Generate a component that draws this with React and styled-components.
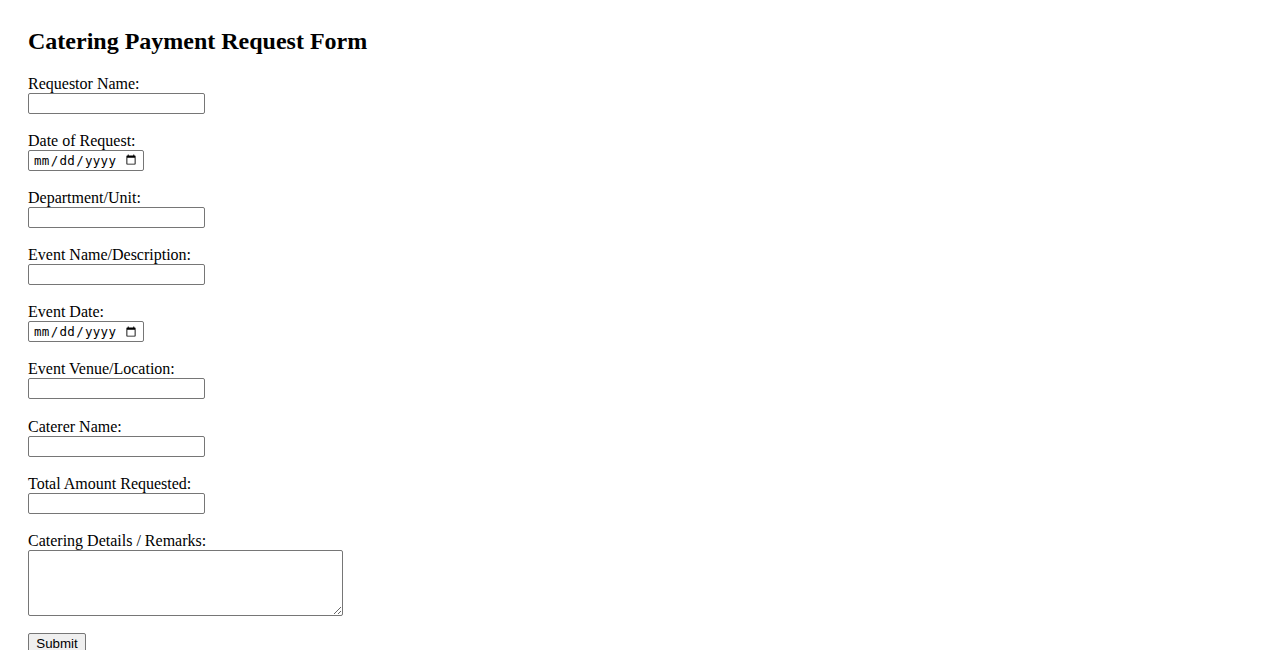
import React from "react";
import styled, { createGlobalStyle } from "styled-components";

const GlobalStyle = createGlobalStyle`
  body {
    margin: 0;
    padding: 28px;
    background: #fff;
    color: #000;
    font-family: "Liberation Serif", "Times New Roman", serif;
    font-size: 16px;
  }
`;

const Title = styled.h2`
  margin: 0 0 19px;
  font-size: 24px;
  font-weight: bold;
  line-height: 27px;
`;

const Form = styled.form`
  display: flex;
  flex-direction: column;
  align-items: flex-start;
  gap: 17.1px;
`;

const Field = styled.div`
  display: flex;
  flex-direction: column;
  align-items: flex-start;
`;

const Label = styled.label`
  padding-top: 1px;
  line-height: 18px;
`;

const TextInput = styled.input`
  box-sizing: border-box;
  width: ${(p) => (p.type === "date" ? "116px" : "177px")};
  height: 21px;
  margin: 0;
  padding: 1px 2px;
  border: 1px solid #767676;
  border-radius: 2px;
  background: #fff;
  font-size: 13.33px;
  ${(p) =>
    p.type === "date"
      ? `font-family: "DejaVu Sans Mono", monospace; font-size: 12.5px; padding: 1px 4px; letter-spacing: 0.3px;`
      : `font-family: "Liberation Sans", Arial, sans-serif;`}
`;

const TextArea = styled.textarea`
  box-sizing: border-box;
  width: 315px;
  height: 66px;
  margin: 0;
  padding: 2px;
  border: 1px solid #767676;
  border-radius: 2px;
  font-family: "DejaVu Sans Mono", monospace;
  font-size: 13.33px;
`;

const SubmitButton = styled.button`
  box-sizing: border-box;
  width: 58px;
  height: 21px;
  padding: 1px 6px;
  border: 1px solid #767676;
  border-radius: 2px;
  background: #efefef;
  color: #000;
  font-family: "Liberation Sans", Arial, sans-serif;
  font-size: 13.33px;
`;

const fields = [
  { id: "requestor", label: "Requestor Name:", type: "text" },
  { id: "requestDate", label: "Date of Request:", type: "date" },
  { id: "department", label: "Department/Unit:", type: "text" },
  { id: "eventName", label: "Event Name/Description:", type: "text" },
  { id: "eventDate", label: "Event Date:", type: "date" },
  { id: "venue", label: "Event Venue/Location:", type: "text" },
  { id: "caterer", label: "Caterer Name:", type: "text" },
  { id: "amount", label: "Total Amount Requested:", type: "text" },
];

export default function App() {
  return (
    <>
      <GlobalStyle />
      <Title>Catering Payment Request Form</Title>
      <Form onSubmit={(e) => e.preventDefault()}>
        {fields.map((f) => (
          <Field key={f.id}>
            <Label htmlFor={f.id}>{f.label}</Label>
            <TextInput id={f.id} type={f.type} />
          </Field>
        ))}
        <Field>
          <Label htmlFor="details">Catering Details / Remarks:</Label>
          <TextArea id="details" />
        </Field>
        <SubmitButton type="submit">Submit</SubmitButton>
      </Form>
    </>
  );
}
